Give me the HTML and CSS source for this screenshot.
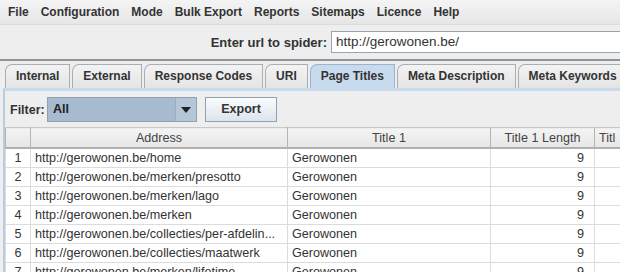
FILE: index.html
```html
<!DOCTYPE html>
<html lang="en">
<head>
  <meta charset="UTF-8">
  <title>Screaming Frog SEO Spider</title>
  <link rel="stylesheet" href="styles.css">
</head>
<body>
  <div class="menubar">
    <span>File</span>
    <span>Configuration</span>
    <span>Mode</span>
    <span>Bulk Export</span>
    <span>Reports</span>
    <span>Sitemaps</span>
    <span>Licence</span>
    <span>Help</span>
  </div>

  <div class="url-row">
    <label>Enter url to spider:</label>
    <div class="url-input">http://gerowonen.be/</div>
  </div>

  <div class="panel">
    <div class="tabs">
      <div class="tab">Internal</div>
      <div class="tab">External</div>
      <div class="tab">Response Codes</div>
      <div class="tab">URI</div>
      <div class="tab active">Page Titles</div>
      <div class="tab">Meta Description</div>
      <div class="tab">Meta Keywords</div>
    </div>

    <div class="content">
      <div class="filter-row">
        <span class="filter-label">Filter:</span>
        <div class="combo">
          <span class="combo-value">All</span>
          <span class="combo-arrow"><svg width="10" height="6" viewBox="0 0 10 6"><path d="M0 0 H10 L5 6 Z" fill="#222"/></svg></span>
        </div>
        <div class="button">Export</div>
      </div>

      <table class="grid">
        <thead>
          <tr>
            <th class="num"></th>
            <th class="addr">Address</th>
            <th class="title">Title 1</th>
            <th class="len">Title 1 Length</th>
            <th class="more">Titl</th>
          </tr>
        </thead>
        <tbody>
          <tr><td class="num">1</td><td>http://gerowonen.be/home</td><td>Gerowonen</td><td class="len">9</td><td></td></tr>
          <tr><td class="num">2</td><td>http://gerowonen.be/merken/presotto</td><td>Gerowonen</td><td class="len">9</td><td></td></tr>
          <tr><td class="num">3</td><td>http://gerowonen.be/merken/lago</td><td>Gerowonen</td><td class="len">9</td><td></td></tr>
          <tr><td class="num">4</td><td>http://gerowonen.be/merken</td><td>Gerowonen</td><td class="len">9</td><td></td></tr>
          <tr><td class="num">5</td><td>http://gerowonen.be/collecties/per-afdelin...</td><td>Gerowonen</td><td class="len">9</td><td></td></tr>
          <tr><td class="num">6</td><td>http://gerowonen.be/collecties/maatwerk</td><td>Gerowonen</td><td class="len">9</td><td></td></tr>
          <tr><td class="num">7</td><td>http://gerowonen.be/merken/lifetime</td><td>Gerowonen</td><td class="len">9</td><td></td></tr>
        </tbody>
      </table>
    </div>
  </div>
</body>
</html>
```

FILE: styles.css
```css
html, body {
  margin: 0;
  width: 620px;
  height: 272px;
  overflow: hidden;
}

body {
  background: #eeeeee;
  color: #222;
  font-family: "Liberation Sans", Arial, sans-serif;
}

.menubar {
  height: 24px;
  display: flex;
  align-items: center;
  gap: 12px;
  padding-left: 8px;
  font-size: 12px;
  font-weight: bold;
  color: #333;
  background: linear-gradient(#f4f4f4, #e6e6e6);
  border-bottom: 1px solid #dcdcdc;
}

.url-row {
  height: 34px;
  display: grid;
  grid-template-columns: 327px 1fr;
  align-items: center;
  column-gap: 4px;
}
.url-row label {
  text-align: right;
  font-size: 13px;
  font-weight: bold;
  color: #333;
}
.url-input {
  height: 20px;
  line-height: 20px;
  padding-left: 4px;
  background: #fff;
  border: 1px solid #9aa4ae;
  border-right: none;
  font-size: 13.5px;
  color: #333;
}

.panel {
  border-top: 2px solid #8c949c;
  padding: 3px 0 0 3px;
}

.tabs {
  display: flex;
  gap: 2px;
  padding-left: 2px;
}
.tab {
  height: 23px;
  line-height: 23px;
  padding: 0 10px;
  font-size: 12px;
  font-weight: bold;
  color: #333;
  background: linear-gradient(#f3f3f3, #e4e4e4);
  border: 1px solid #a8aeb4;
  border-bottom: none;
  border-top-left-radius: 7px;
  white-space: nowrap;
}
.tab.active {
  background: #c8dbee;
  border-color: #9eb3c8;
}

.content {
  border-top: 3px solid #c8dbee;
  border-left: 2px solid #b8cde3;
  height: 200px;
}

.filter-row {
  height: 25px;
  display: flex;
  align-items: center;
  margin: 6px 0 5px 5px;
}
.filter-label {
  font-size: 12.5px;
  font-weight: bold;
  color: #333;
  width: 37px;
}
.combo {
  width: 148px;
  height: 23px;
  display: flex;
  border: 1px solid #8fa2b4;
  background: #a6bbcf;
}
.combo-value {
  flex: 1;
  padding-left: 5px;
  line-height: 23px;
  font-size: 12.5px;
  font-weight: bold;
  color: #222;
}
.combo-arrow {
  width: 20px;
  display: flex;
  align-items: center;
  justify-content: center;
  border-left: 1px solid #9aaec2;
  background: #b4c6d8;
}
.button {
  margin-left: 8px;
  width: 70px;
  height: 23px;
  line-height: 23px;
  text-align: center;
  font-size: 12.5px;
  font-weight: bold;
  color: #333;
  background: linear-gradient(#fbfcfd, #dbe4ed);
  border: 1px solid #8fa2b4;
}

.grid {
  border-collapse: collapse;
  table-layout: fixed;
  width: 640px;
  background: #fff;
  font-size: 12.6px;
  color: #333;
}
.grid th {
  height: 19px;
  font-weight: normal;
  color: #444;
  background: linear-gradient(#f4f4f4, #e6e6e6);
  border: 1px solid #b4b4b4;
  border-top-color: #c8c8c8;
  border-bottom: 2px solid #b0b0b0;
  padding: 0;
}
.grid th.num { width: 24px; }
.grid th.addr { width: 256px; }
.grid th.title { width: 202px; }
.grid th.len { width: 103px; }
.grid th.more { text-align: left; padding-left: 4px; }

.grid td {
  height: 18px;
  padding: 0 0 0 4px;
  border: 1px solid #dcdcdc;
  white-space: nowrap;
  overflow: hidden;
}
.grid td.num {
  text-align: center;
  padding: 0;
}
.grid td.len {
  text-align: right;
  padding-right: 10px;
}
```
